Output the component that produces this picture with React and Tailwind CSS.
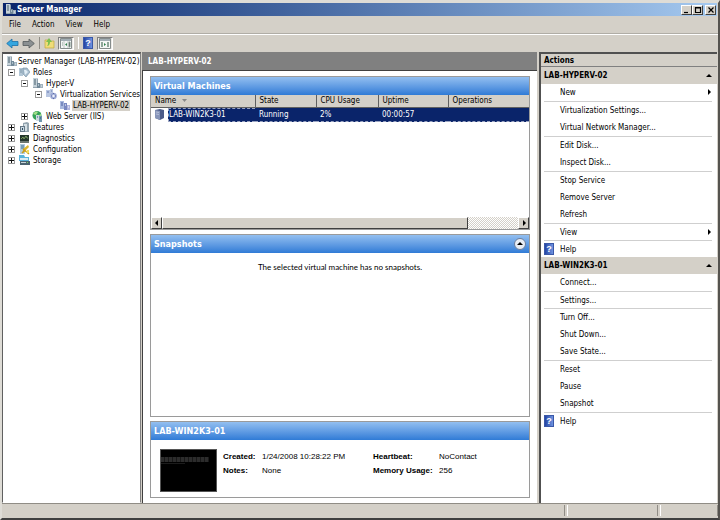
import React from "react";

function ServerIcon() {
  return (
    <svg className="h-[11px] w-[11px] shrink-0" viewBox="0 0 11 11" aria-hidden="true">
      <path d="M1 0h4l1 1v9H1z" fill="#91a2ae" />
      <path d="M1 0h4v9H1z" fill="#c5d1d8" />
      <path d="M2 2h2M2 4h2M2 6h2" stroke="#48606f" />
      <path d="M5 5h3v5H5z" fill="#718898" />
      <path d="M8 6h3v4H8z" fill="#a2b2bd" />
      <path d="M6 7h1M9 8h1" stroke="#e8f4f8" />
    </svg>
  );
}

function RolesIcon() {
  return (
    <svg className="h-[11px] w-[11px] shrink-0" viewBox="0 0 11 11" aria-hidden="true">
      <path d="M0 1h4v8H0z" fill="#b3c7d6" />
      <path d="M1 3h2M1 5h2" stroke="#7f97a8" />
      <path d="M4 1h4l3 4-4 5-3-3z" fill="#a9bfd0" stroke="#6f8a9e" strokeWidth=".6" />
      <path d="M5 3h2l2 2-3 3z" fill="#e2eef6" />
    </svg>
  );
}

function ServicesIcon() {
  return (
    <svg className="h-[11px] w-[11px] shrink-0" viewBox="0 0 11 11" aria-hidden="true">
      <path d="M0 1h4v7H0zM4 0h3v6H4z" fill="#b8c6e2" />
      <path d="M1 3h2M5 2h1" stroke="#6478ae" />
      <circle cx="7.500" cy="7" r="3.300" fill="#9ba9d4" />
      <circle cx="7.500" cy="7" r="1.200" fill="#eef1fc" />
      <path d="M7.500 4v1M7.500 9v1M5 7h1M9 7h1" stroke="#616ba8" />
    </svg>
  );
}

function HostIcon() {
  return (
    <svg className="h-[11px] w-[11px] shrink-0" viewBox="0 0 11 11" aria-hidden="true">
      <path d="M1 1h4v8H1z" fill="#a9b9df" />
      <path d="M2 3h2M2 5h2" stroke="#4b5fa0" />
      <path d="M5 3h3v7H5z" fill="#7887c0" />
      <path d="M8 5h3v5H8z" fill="#b0b5dd" />
      <path d="M6 5h1M9 7h1" stroke="#fff" />
    </svg>
  );
}

function WebIcon() {
  return (
    <svg className="h-[11px] w-[11px] shrink-0" viewBox="0 0 11 11" aria-hidden="true">
      <circle cx="5" cy="4.500" r="4.500" fill="#35a25a" />
      <path d="M1 3c2-3 4-3 5-2L4 4zM5 5l4-2v4z" fill="#a3de87" />
      <path d="M4 4h3v6H4z" fill="#ced9df" />
      <path d="M7 5h3v6H7z" fill="#6d97ae" />
      <path d="M5 6h1M8 7h1" stroke="#315b78" />
    </svg>
  );
}

function FeaturesIcon() {
  return (
    <svg className="h-[11px] w-[11px] shrink-0" viewBox="0 0 11 11" aria-hidden="true">
      <path d="M4 1l4-1 2 1v9H4z" fill="#94a5b0" />
      <path d="M5 2h3v7H5z" fill="#d4dfe5" />
      <path d="M1 4h5v6H1z" fill="#657887" />
      <path d="M2 5h3v4H2z" fill="#c8d8e2" />
      <path d="M3 6h1v2H3z" fill="#304d61" />
    </svg>
  );
}

function DiagnosticsIcon() {
  return (
    <svg className="h-[11px] w-[11px] shrink-0" viewBox="0 0 11 11" aria-hidden="true">
      <path d="M1 2h9v6H1z" fill="#25372d" />
      <path d="M2 6l2-2 1 2 2-3 1 2h1" fill="none" stroke="#8bb46c" strokeWidth=".8" />
      <path d="M1 8h9v2H1z" fill="#6b7770" />
    </svg>
  );
}

function ConfigurationIcon() {
  return (
    <svg className="h-[11px] w-[11px] shrink-0" viewBox="0 0 11 11" aria-hidden="true">
      <path d="M1 0h5v10H1z" fill="#b0cbdc" />
      <path d="M2 2h3M2 4h3" stroke="#3f718e" />
      <path d="M4 5l5-4 1 2-6 6z" fill="#dcb62c" />
      <path d="M4 5l6 5M3 9l3-3" stroke="#c79c1c" strokeWidth="1.500" />
      <path d="M8 6h2v3H7z" fill="#f2d95b" />
    </svg>
  );
}

function StorageIcon() {
  return (
    <svg className="h-[11px] w-[11px] shrink-0" viewBox="0 0 11 11" aria-hidden="true">
      <path d="M0 0h5l1 2h4v4H0z" fill="#57b3dc" />
      <path d="M1 3h8v2H1z" fill="#ddecf2" />
      <path d="M1 6h10v4H1z" fill="#4b6370" />
      <path d="M2 7h5v1H2z" fill="#c9d5da" />
      <path d="M8 7h1v1H8z" fill="#79d45a" />
    </svg>
  );
}

function HelpIcon() {
  return (
    <span className="flex h-[12px] w-[10px] shrink-0 items-center justify-center border border-[#3a58a8] bg-linear-to-r from-[#2544a4] to-[#6f93e0] font-['Liberation_Sans',sans-serif] text-[9px] leading-none font-bold text-white">
      ?
    </span>
  );
}

function ArrowIcon({ back }) {
  return (
    <svg className="h-[11px] w-[13px]" viewBox="0 0 13 11" aria-hidden="true">
      {back ? (
        <path d="M.700 5.500L6 1v2.500h6v4H6V10z" fill="#35a6df" stroke="#1c6fa6" strokeWidth=".8" />
      ) : (
        <path d="M12.300 5.500L7 1v2.500H1v4h6V10z" fill="#8b9092" stroke="#53595c" strokeWidth=".8" />
      )}
    </svg>
  );
}

function FolderIcon() {
  return (
    <svg className="h-[12px] w-[11px]" viewBox="0 0 11 12" aria-hidden="true">
      <path d="M1 3h3l1 1h5v7H1z" fill="#f0dc78" stroke="#c0a640" strokeWidth=".7" />
      <path d="M3 9c2 0 3-2 3-4h2L5 1 2 5h2c0 2 0 3-1 4z" fill="#7cc050" />
    </svg>
  );
}

function PaneIcon({ right }) {
  return (
    <svg className="h-[11px] w-[12px]" viewBox="0 0 12 11" aria-hidden="true">
      <path d="M.500.500h11v10H.500z" fill="#f4f6f5" stroke="#858c8c" />
      <path d="M1 1h10v2H1z" fill="#a2adb4" />
      {right ? (
        <>
          <path d="M2 4h2v5H2zM8 4h2v5H8z" fill="#8fa69a" />
          <path d="M5 5l2 1.500L5 8z" fill="#2d824c" />
        </>
      ) : (
        <>
          <path d="M2 5h1M2 7h1M9 4h1v5H9z" stroke="#8aa095" />
          <path d="M7 5v3L5 6.500z" fill="#2d824c" />
          <path d="M4 3v7M8 3v7" stroke="#a3aaa8" strokeWidth=".6" />
        </>
      )}
    </svg>
  );
}

const tree = [
  { label: "Roles", Icon: RolesIcon, pad: "pl-[5px]", open: true },
  { label: "Hyper-V", Icon: ServerIcon, pad: "pl-[18px]", open: true },
  { label: "Virtualization Services", Icon: ServicesIcon, pad: "pl-[32px]", open: true },
  { label: "LAB-HYPERV-02", Icon: HostIcon, pad: "pl-[45px]", leaf: true, selected: true },
  { label: "Web Server (IIS)", Icon: WebIcon, pad: "pl-[18px]" },
  { label: "Features", Icon: FeaturesIcon, pad: "pl-[5px]" },
  { label: "Diagnostics", Icon: DiagnosticsIcon, pad: "pl-[5px]" },
  { label: "Configuration", Icon: ConfigurationIcon, pad: "pl-[5px]" },
  { label: "Storage", Icon: StorageIcon, pad: "pl-[5px]" },
];

function TreeRow({ label, Icon, pad, open, leaf, selected }) {
  return (
    <li className={`flex h-[11px] items-center ${pad}`}>
      {!leaf && (
        <button
          type="button"
          aria-label={`${open ? "Collapse" : "Expand"} ${label}`}
          className="mr-1 h-[7px] w-[7px] shrink-0 border border-[#9a9a9a] bg-white"
        >
          <svg className="h-[5px] w-[5px]" viewBox="0 0 5 5" aria-hidden="true">
            <path d={open ? "M1 2.500h3" : "M0 2.500h5M2.500 0v5"} stroke="#111" />
          </svg>
        </button>
      )}
      <span className={leaf ? "ml-[11px]" : ""}>
        <Icon />
      </span>
      <span className={`ml-[2px] px-px leading-[11px] ${selected ? "bg-[#d4d0c8]" : ""}`}>{label}</span>
    </li>
  );
}

function Triangle({ dir }) {
  const paths = { up: "M0 4l3-3 3 3z", right: "M2 0l3 3-3 3z", left: "M4 0L1 3l3 3z" };
  return (
    <svg className="h-[6px] w-[6px]" viewBox="0 0 6 6" aria-hidden="true">
      <path d={paths[dir]} fill="#000" />
    </svg>
  );
}

const groups = [
  {
    title: "LAB-HYPERV-02",
    sections: [
      ["New"],
      ["Virtualization Settings...", "Virtual Network Manager..."],
      ["Edit Disk...", "Inspect Disk..."],
      ["Stop Service", "Remove Server", "Refresh"],
      ["View"],
      ["Help"],
    ],
  },
  {
    title: "LAB-WIN2K3-01",
    sections: [
      ["Connect..."],
      ["Settings..."],
      ["Turn Off...", "Shut Down...", "Save State..."],
      ["Reset", "Pause", "Snapshot"],
      ["Help"],
    ],
  },
];

function ActionGroup({ title, sections }) {
  return (
    <section>
      <h3 className="flex h-[17px] items-center justify-between bg-[#d4d0c8] pr-[5px] pl-[3px] font-bold">
        {title}
        <Triangle dir="up" />
      </h3>
      {sections.map((items, s) => (
        <ul
          key={s}
          className={`mr-[5px] ml-[3px] ${s > 0 ? "border-t border-[#cfcfcf]" : ""} ${items.length === 1 ? "h-[17px]" : ""}`}
        >
          {items.map((item) => (
            <li key={item}>
              <button
                type="button"
                className={`flex w-full items-center justify-between text-left ${items.length === 1 ? "h-4" : "h-[17px]"}`}
              >
                <span className="flex items-center">
                  <span className="w-4">{item === "Help" && <HelpIcon />}</span>
                  {item}
                </span>
                {(item === "New" || item === "View") && <Triangle dir="right" />}
              </button>
            </li>
          ))}
        </ul>
      ))}
    </section>
  );
}

function PanelHeader({ children, action }) {
  return (
    <h2 className="flex h-[18px] shrink-0 items-center justify-between bg-linear-to-b from-[#93bff0] to-[#2f7bd6] px-[3px] text-[9px] font-bold text-white">
      {children}
      {action}
    </h2>
  );
}

const raised = "border border-t-white border-l-white border-r-[#404040] border-b-[#404040] bg-[#d4d0c8]";
const dashed = "border-y border-dashed border-[#9aa4c2] p-0 pl-1";

function WindowButton({ label, d }) {
  return (
    <button type="button" aria-label={label} className={`flex h-[10px] w-[11px] items-center justify-center ${raised}`}>
      <svg className="h-[8px] w-[8px]" viewBox="0 0 8 8" aria-hidden="true">
        <path d={d} fill="none" stroke="#000" strokeWidth="1.200" />
      </svg>
    </button>
  );
}

const columns = [
  ["Name", "w-[104px]"],
  ["State", "w-[61px]"],
  ["CPU Usage", "w-[62px]"],
  ["Uptime", "w-[70px]"],
  ["Operations", ""],
];

export default function App() {
  return (
    <div className="flex h-screen flex-col border-2 border-t-[3px] border-t-[#dedcd6] border-r-[#55534f] border-b-[#404040] border-l-[#dedcd6] bg-[#d4d0c8] font-['DejaVu_Sans_Condensed','DejaVu_Sans',sans-serif] text-[8px] leading-[11px] text-black">
      <header className="mx-px flex h-[13px] shrink-0 items-center bg-linear-to-r from-[#0a246a] to-[#a6caf0] pr-px pl-[2px]">
        <ServerIcon />
        <h1 className="ml-px flex-1 font-bold text-white">Server Manager</h1>
        <WindowButton label="Minimize" d="M1 6.500h4" />
        <WindowButton label="Maximize" d="M1.500 1.500h5v5h-5zM1 2h6" />
        <span className="w-[2px]" />
        <WindowButton label="Close" d="M1.500 1.500l5 5M6.500 1.500l-5 5" />
      </header>

      <nav className="flex h-[18px] shrink-0 items-center gap-[11px] border-b border-[#b0ada6] pl-[7px]" aria-label="Menu">
        <button type="button">File</button>
        <button type="button">Action</button>
        <button type="button">View</button>
        <button type="button">Help</button>
      </nav>

      <div className="flex h-[17px] shrink-0 items-center border-t border-white pl-1" role="toolbar" aria-label="Tools">
        <button type="button" aria-label="Back"><ArrowIcon back /></button>
        <button type="button" aria-label="Forward" className="ml-[3px]"><ArrowIcon /></button>
        <span className="mx-1 h-3 border-l border-[#908d86]" />
        <button type="button" aria-label="Up one level"><FolderIcon /></button>
        <button type="button" aria-label="Show console tree" className="ml-[3px] border border-t-[#808080] border-r-white border-b-white border-l-[#808080] bg-[#eceae6] px-px"><PaneIcon /></button>
        <span className="mx-1 h-3 border-l border-white" />
        <button type="button" aria-label="Help"><HelpIcon /></button>
        <button type="button" aria-label="Show action pane" className="ml-[4px] border border-t-[#808080] border-r-white border-b-white border-l-[#808080] bg-[#eceae6] px-px"><PaneIcon right /></button>
      </div>

      <div className="flex min-h-0 flex-1 pt-px">
        <aside className="mr-px w-[139px] shrink-0 border border-t-2 border-t-[#505050] border-l-[#606060] border-r-[#808080] border-b-white bg-white pt-px">
          <div className="flex h-[12px] items-center pl-[3px]">
            <ServerIcon />
            <span className="ml-px whitespace-nowrap">Server Manager (LAB-HYPERV-02)</span>
          </div>
          <ul className="whitespace-nowrap">
            {tree.map((row) => (
              <TreeRow key={row.label} {...row} />
            ))}
          </ul>
        </aside>

        <main className="mr-[2px] flex min-w-0 flex-1 flex-col">
          <div className="flex h-[18px] shrink-0 items-center bg-[#808080] pl-[6px] font-bold text-white">LAB-HYPERV-02</div>
          <div className="flex min-h-0 flex-1 flex-col gap-1 border-t border-l border-[#404040] bg-white px-[7px] pt-[5px] pb-[5px]">
            <section className="flex h-[154px] shrink-0 flex-col border border-[#9a9a9a]">
              <PanelHeader>Virtual Machines</PanelHeader>
              <table className="w-full table-fixed border-collapse text-left">
                <thead>
                  <tr className="h-[12px] bg-[#d4d0c8]">
                    {columns.map(([name, width]) => (
                      <th key={name} scope="col" className={`border-r border-b border-[#606060] p-0 pl-1 leading-[11px] font-normal last:border-r-0 ${width}`}>
                        {name}
                        {name === "Name" && (
                          <svg className="ml-[6px] inline h-[3px] w-[5px]" viewBox="0 0 5 3" aria-hidden="true">
                            <path d="M0 0h5L2.500 3z" fill="#888" />
                          </svg>
                        )}
                      </th>
                    ))}
                  </tr>
                </thead>
                <tbody>
                  <tr className="h-[14px] bg-[#0a246a] text-white">
                    <td className="p-0">
                      <span className="flex h-[14px] items-center">
                        <span className="flex h-full w-[17px] items-center justify-center bg-white">
                          <svg className="h-[11px] w-[9px]" viewBox="0 0 9 11" aria-hidden="true">
                            <path d="M0 1l5-1 4 1v8l-4 2-5-2z" fill="#4c5c88" />
                            <path d="M0 1l5 1v9l-5-2z" fill="#8795b9" />
                            <path d="M1 3l3 .5M1 5l3 .5" stroke="#d1d9ef" strokeWidth=".6" />
                          </svg>
                        </span>
                        <span className="flex h-full flex-1 items-center border-y border-l border-dashed border-[#9aa4c2]">LAB-WIN2K3-01</span>
                      </span>
                    </td>
                    <td className={dashed}>Running</td>
                    <td className={dashed}>2%</td>
                    <td className={dashed}>00:00:57</td>
                    <td className={dashed} />
                  </tr>
                </tbody>
              </table>
              <div className="mt-auto flex h-[12px] shrink-0 bg-[repeating-conic-gradient(#d4d0c8_0_25%,#ffffff_0_50%)] bg-size-[2px_2px]">
                <button type="button" aria-label="Scroll left" className={`flex w-[11px] items-center justify-center ${raised}`}><Triangle dir="left" /></button>
                <div className="flex-1"><div className={`h-full w-[86%] ${raised}`} /></div>
                <button type="button" aria-label="Scroll right" className={`flex w-[11px] items-center justify-center ${raised}`}><Triangle dir="right" /></button>
              </div>
            </section>

            <section className="flex min-h-0 flex-1 flex-col border border-[#9a9a9a]">
              <PanelHeader
                action={
                  <button type="button" aria-label="Collapse snapshots" className="flex h-3 w-3 items-center justify-center rounded-full border border-[#6b7d9c] bg-[#e8edf5]">
                    <Triangle dir="up" />
                  </button>
                }
              >
                Snapshots
              </PanelHeader>
              <p className="mt-[9px] text-center font-['Lato','Liberation_Sans',sans-serif]">The selected virtual machine has no snapshots.</p>
            </section>

            <section className="h-[77px] shrink-0 border border-[#9a9a9a]">
              <PanelHeader>LAB-WIN2K3-01</PanelHeader>
              <div className="flex pt-[9px] pl-[9px] font-['Liberation_Sans',sans-serif]">
                <div className="h-[43px] w-[57px] border border-[#555] bg-black pt-[7px]" role="img" aria-label="Console preview">
                  <div className="h-[5px] w-[48px] bg-[repeating-linear-gradient(90deg,#2c2c2c_0_3px,#181818_3px_4px)]" />
                  <div className="mt-px h-px w-[24px] bg-[#1c1c1c]" />
                </div>
                <dl className="ml-[6px] grid grid-cols-[39px_111px_66px_auto] content-start gap-y-[2px] pt-[2px] leading-[12px] whitespace-nowrap">
                  <dt className="font-bold">Created:</dt>
                  <dd>1/24/2008 10:28:22 PM</dd>
                  <dt className="font-bold">Heartbeat:</dt>
                  <dd>NoContact</dd>
                  <dt className="font-bold">Notes:</dt>
                  <dd>None</dd>
                  <dt className="font-bold">Memory Usage:</dt>
                  <dd>256</dd>
                </dl>
              </div>
            </section>
          </div>
        </main>

        <aside className="mr-px w-[178px] shrink-0 border-t-2 border-l-2 border-[#505050] bg-white">
          <h2 className="flex h-[13px] items-center border-b border-[#808080] bg-[#d4d0c8] pl-[3px] font-bold">Actions</h2>
          {groups.map((group) => (
            <ActionGroup key={group.title} {...group} />
          ))}
        </aside>
      </div>

      <footer className="flex h-[15px] shrink-0 gap-[2px] border-t border-[#908d86] pt-px pb-[2px]">
        <div className="flex-1 border-r border-[#908d86]" />
        <div className="w-[91px] border-r border-l border-r-[#908d86] border-l-white" />
        <div className="w-[58px] border-r border-l border-r-[#908d86] border-l-white" />
      </footer>
    </div>
  );
}
